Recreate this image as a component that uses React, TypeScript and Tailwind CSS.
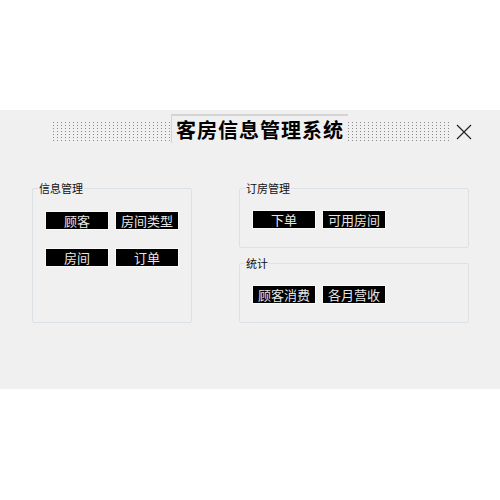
import React from "react";

const Dots = ({ width }: { width: number }) => (
  <svg width={width} height={20} className="block">
    <defs>
      <pattern id={`dots-${width}`} width="4" height="3" patternUnits="userSpaceOnUse">
        <rect x="0" y="0" width="1" height="1" fill="#8a8a8a" />
      </pattern>
    </defs>
    <rect width={width} height={20} fill={`url(#dots-${width})`} />
  </svg>
);

const Btn = ({ label }: { label: string }) => (
  <button className="w-[64px] h-[19px] bg-black text-[#e6e6e6] text-[13px] leading-[17px] border border-[#fafafa] flex items-center justify-center">
    {label}
  </button>
);

const Group = ({ title, className, children }: { title: string; className: string; children: React.ReactNode }) => (
  <fieldset className={`border border-[#dce1e5] rounded-[2px] px-[12px] ${className}`}>
    <legend className="-ml-[7px] px-[1px] text-[11px] leading-[14px] text-[#111]">{title}</legend>
    {children}
  </fieldset>
);

export default function App() {
  return (
    <div
      className="w-[500px] h-[500px] bg-white pt-[110px]"
      style={{ fontFamily: '"Noto Sans CJK SC", "Noto Sans", sans-serif' }}
    >
      <div className="h-[279px] bg-[#f0f0f0] pt-[4px]">
        {/* title bar */}
        <div className="flex items-start pl-[53px]">
          <div className="mt-[8px]">
            <Dots width={117} />
          </div>
          <div className="w-[177px] h-[29px] ml-[1px] border-t-2 border-l border-[#d4d4d4] flex items-center justify-center text-[20px] font-semibold text-black tracking-[1px]">
            客房信息管理系统
          </div>
          <div className="mt-[8px]">
            <Dots width={101} />
          </div>
          <svg width="16" height="16" viewBox="0 0 16 16" className="mt-[10px] ml-[7px]">
            <path d="M1 1 L15 15 M15 1 L1 15" stroke="#222" strokeWidth="1.2" fill="none" />
          </svg>
        </div>

        {/* groups */}
        <div className="flex items-start pl-[32px] mt-[38px] gap-[47px]">
          <Group title="信息管理" className="w-[160px] h-[142px]">
            <div className="grid grid-cols-[64px_64px] gap-x-[6px] gap-y-[18px] pt-[16px]">
              <Btn label="顾客" />
              <Btn label="房间类型" />
              <Btn label="房间" />
              <Btn label="订单" />
            </div>
          </Group>
          <div className="flex flex-col gap-[8px]">
            <Group title="订房管理" className="w-[230px] h-[67px]">
              <div className="flex gap-[6px] pt-[15px]">
                <Btn label="下单" />
                <Btn label="可用房间" />
              </div>
            </Group>
            <Group title="统计" className="w-[230px] h-[67px]">
              <div className="flex gap-[6px] pt-[15px]">
                <Btn label="顾客消费" />
                <Btn label="各月营收" />
              </div>
            </Group>
          </div>
        </div>
      </div>
    </div>
  );
}
